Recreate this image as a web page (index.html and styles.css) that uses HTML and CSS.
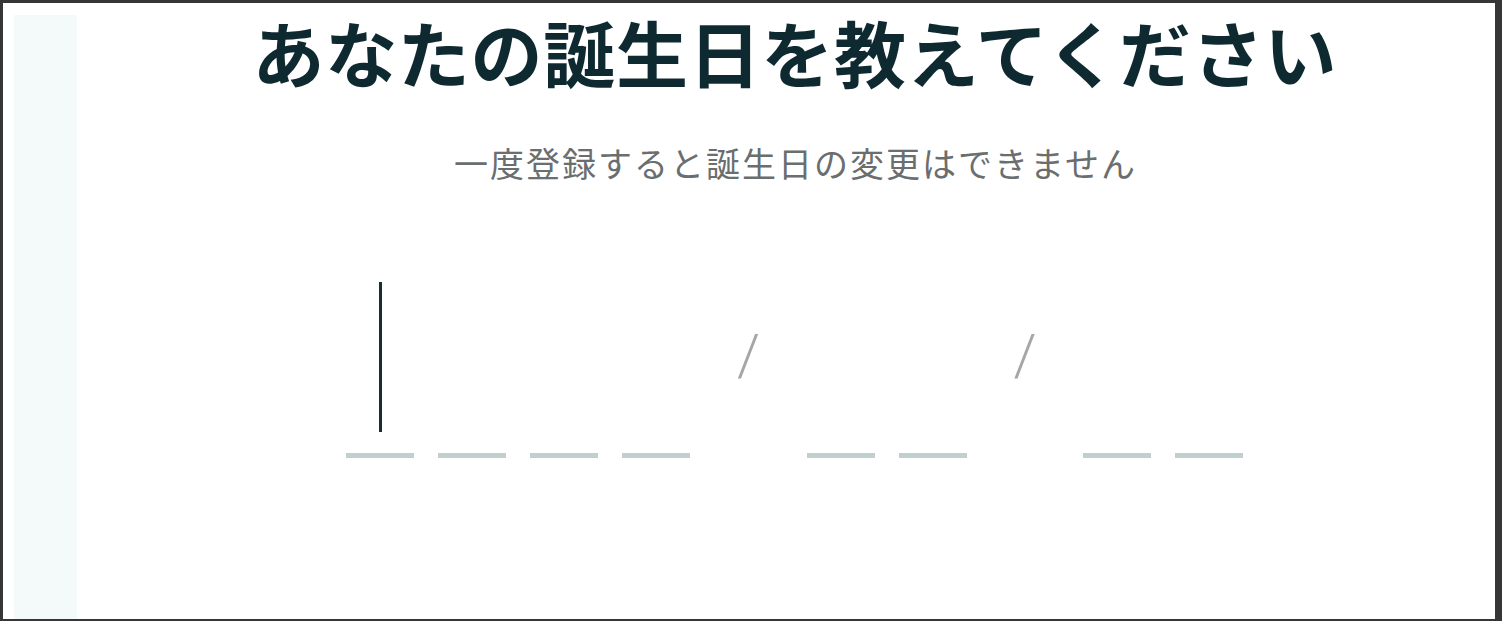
FILE: index.html
```html
<!DOCTYPE html>
<html lang="ja">
<head>
<meta charset="utf-8">
<title>誕生日登録</title>
<link rel="stylesheet" href="styles.css">
</head>
<body>
<div class="frame">
  <aside class="strip"></aside>
  <main class="main">
    <h1 class="title">あなたの誕生日を教えてください</h1>
    <p class="subtitle">一度登録すると誕生日の変更はできません</p>
    <div class="date-row">
      <div class="group">
        <div class="digit"><span class="cursor"></span></div>
        <div class="digit"></div>
        <div class="digit"></div>
        <div class="digit"></div>
      </div>
      <div class="sep sep-a"><span class="slash">/</span></div>
      <div class="group">
        <div class="digit"></div>
        <div class="digit"></div>
      </div>
      <div class="sep sep-b"><span class="slash">/</span></div>
      <div class="group">
        <div class="digit"></div>
        <div class="digit"></div>
      </div>
    </div>
  </main>
</div>
</body>
</html>
```
FILE: styles.css
```css
html, body {
  margin: 0;
  padding: 0;
}
body {
  background: #363636;
  width: 1502px;
  height: 621px;
  overflow: hidden;
  font-family: "Noto Sans CJK JP", "Noto Sans", sans-serif;
}
.frame {
  margin: 3px 7px 0 3px;
  height: 616px;
  background: #ffffff;
  padding: 12px 0 0 11px;
  display: flex;
  box-sizing: border-box;
}
.strip {
  width: 63px;
  flex: none;
  background: #f4f9f9;
}
.main {
  flex: 1;
  padding-left: 17px;
  display: flex;
  flex-direction: column;
  align-items: center;
}
.title {
  margin: -7px 0 0 0;
  font-size: 72px;
  line-height: 86px;
  font-weight: 700;
  color: #0e2a30;
  letter-spacing: 0.7px;
  text-indent: 0.7px;
  text-align: center;
  white-space: nowrap;
}
.subtitle {
  margin: 47px 0 0 0;
  font-size: 34px;
  line-height: 44px;
  font-weight: 400;
  color: #6a6e6e;
  letter-spacing: 2px;
  text-indent: 2px;
  white-space: nowrap;
}
.date-row {
  margin-top: 97px;
  display: flex;
  align-items: flex-start;
}
.group {
  display: flex;
  gap: 24px;
}
.digit {
  width: 68px;
  height: 176px;
  box-sizing: border-box;
  border-bottom: 5px solid #c2cfcf;
  display: flex;
  justify-content: center;
}
.cursor {
  width: 3px;
  height: 150px;
  background: #15302f;
}
.sep {
  height: 176px;
  display: flex;
  justify-content: center;
}
.sep-a { width: 117px; }
.sep-b { width: 116px; }
.slash {
  margin-top: 38px;
  font-family: "Roboto", "Liberation Sans", sans-serif;
  font-weight: 300;
  font-size: 58px;
  line-height: 70px;
  color: #a6a6a6;
}
```
